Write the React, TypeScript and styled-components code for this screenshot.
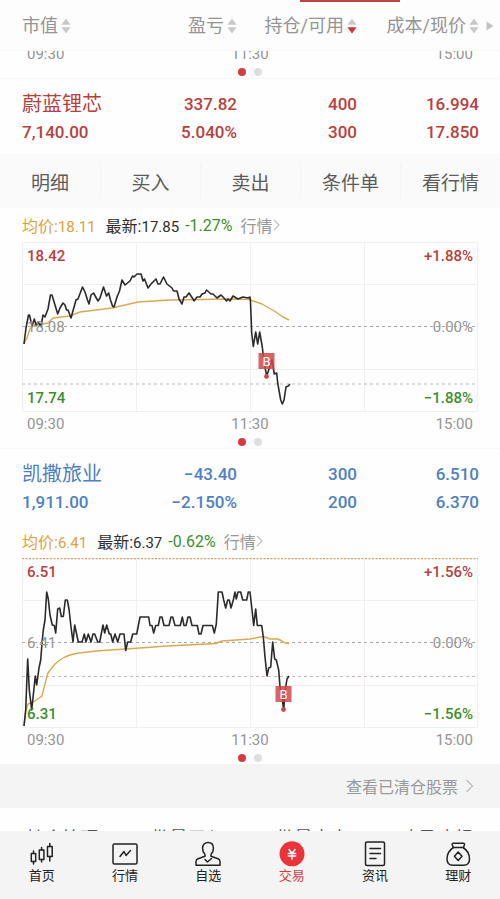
import React from "react";
import styled, { createGlobalStyle } from "styled-components";

const GlobalStyle = createGlobalStyle`
  *, *::before, *::after { box-sizing: border-box; }
  body {
    margin: 0;
    background: #fefefe;
    color: #333;
    font-family: Roboto, "Noto Sans CJK SC", sans-serif;
  }
  button {
    border: 0;
    padding: 0;
    margin: 0;
    background: none;
    color: inherit;
    font: inherit;
    cursor: pointer;
  }
  a { color: inherit; text-decoration: none; }
`;

const RED = "#b8403d";
const BLUE = "#4f80c4";
const GREEN = "#3d8f2c";
const GRAY = "#949494";

const Page = styled.div`
  display: flex;
  flex-direction: column;
  height: 100vh;
`;

const Header = styled.header`
  position: relative;
  flex: none;
  background: #fdfdfd;
  border-bottom: 1px solid #f6f6f6;
`;

const TabStrip = styled.div`
  display: grid;
  grid-template-columns: repeat(5, 1fr);
  height: 2px;
`;

const TabMark = styled.span`
  grid-column: 4;
  background: #bd4447;
`;

const Columns = styled.div`
  display: grid;
  grid-template-columns: 108fr 107fr 120fr 122fr;
  padding: 0 21px 0 22px;
`;

const HeadColumns = styled(Columns)`
  height: 48px;
  align-items: center;
`;

const SortButton = styled.button<{ $first?: boolean }>`
  display: flex;
  align-items: center;
  justify-self: ${(p) => (p.$first ? "start" : "end")};
  gap: 3px;
  font-size: 18px;
  line-height: 28px;
  color: ${GRAY};
  white-space: nowrap;
`;

const MoreColumns = styled.button`
  position: absolute;
  right: 6px;
  top: 20px;
  display: flex;
`;

const Content = styled.main`
  flex: 1;
  min-height: 0;
  overflow-y: auto;
  scrollbar-width: none;
`;

const ScrolledCard = styled.section`
  display: flex;
  flex-direction: column;
  justify-content: flex-end;
  height: 28px;
  overflow: hidden;
  border-bottom: 1px solid #f6f6f6;
`;

const StockCard = styled.section`
  &:not(:last-of-type) { border-bottom: 1px solid #f8f8f8; }
`;

const Holding = styled(Columns)<{ $tone: string }>`
  padding-top: 11px;
  padding-bottom: 8px;
  color: ${(p) => p.$tone};
  font-size: 17px;
  font-weight: 500;
  line-height: 28px;
`;

const StockName = styled.span`
  font-size: 20px;
  font-weight: 400;
  white-space: nowrap;
`;

const Value = styled.span<{ $first?: boolean }>`
  text-align: ${(p) => (p.$first ? "left" : "right")};
`;

const Actions = styled.div`
  display: grid;
  grid-template-columns: repeat(5, 1fr);
  align-items: center;
  height: 54px;
  background: #fafafa;
`;

const Action = styled.button`
  height: 34px;
  font-size: 19px;
  color: #5c5c5c;
  & + & { border-left: 1px solid #f5f5f5; }
`;

const Quote = styled.div`
  display: flex;
  align-items: center;
  height: 34px;
  padding: 0 22px;
  font-size: 16px;
  white-space: nowrap;
`;

const QuoteItem = styled.span<{ $color: string; $gap: number }>`
  color: ${(p) => p.$color};
  margin-right: ${(p) => p.$gap}px;
`;

const Digits = styled.span`
  font-size: 15px;
`;

const QuoteLink = styled.a`
  display: flex;
  align-items: center;
  color: #999;
`;

const Plot = styled.div`
  position: relative;
  margin: 0 22px;
`;

const PlotSvg = styled.svg`
  display: block;
  width: 100%;
  height: auto;
`;

const Scale = styled.div`
  position: absolute;
  inset: 0;
  display: flex;
  flex-direction: column;
  justify-content: space-between;
  padding: 5px;
`;

const ScaleRow = styled.div<{ $color: string; $strong?: boolean }>`
  display: flex;
  justify-content: space-between;
  color: ${(p) => p.$color};
  font-size: 15px;
  font-weight: ${(p) => (p.$strong ? 500 : 400)};
  line-height: 18px;
`;

const Times = styled.div`
  display: flex;
  justify-content: space-between;
  flex: none;
  padding: 0 27px;
  font-size: 15px;
  line-height: 24px;
  color: ${GRAY};
`;

const Pager = styled.div`
  display: flex;
  flex: none;
  justify-content: center;
  align-items: center;
  gap: 8px;
  height: 12px;
`;

const Dot = styled.span<{ $on?: boolean }>`
  width: 8px;
  height: 8px;
  border-radius: 50%;
  background: ${(p) => (p.$on ? "#d63c42" : "#dedede")};
`;

const ClosedLink = styled.a`
  display: flex;
  align-items: center;
  justify-content: flex-end;
  gap: 7px;
  height: 44px;
  padding-right: 26px;
  background: #f4f4f4;
  font-size: 16px;
  color: #999;
`;

const BatchBar = styled.div`
  display: grid;
  grid-template-columns: repeat(4, 1fr);
  height: 58px;
`;

const BatchButton = styled.button`
  font-size: 18px;
  color: #555;
`;

const Nav = styled.nav`
  display: grid;
  grid-template-columns: repeat(6, 1fr);
  flex: none;
  padding: 10px 0 14px;
  background: #f4f4f4;
`;

const NavItem = styled.a<{ $active?: boolean }>`
  display: flex;
  flex-direction: column;
  align-items: center;
  font-size: 13px;
  line-height: 18px;
  color: ${(p) => (p.$active ? "#d8383c" : "#222")};
`;

function SortIcon({ down }: { down?: boolean }) {
  return (
    <svg width="10" height="16" viewBox="0 0 10 16" aria-hidden="true">
      <path d="M5 0.5 9.6 6.8H.4Z" fill="#c9c9c9" />
      <path d="M5 15.5 9.6 9.2H.4Z" fill={down ? "#d2333a" : "#c9c9c9"} />
    </svg>
  );
}

function Chevron({ width, height }: { width: number; height: number }) {
  return (
    <svg width={width} height={height} viewBox="0 0 8 14" fill="none" stroke="#bdbdbd" strokeWidth="1.3" aria-hidden="true">
      <path d="M1 1 7 7 1 13" />
    </svg>
  );
}

type ChartData = {
  high: string;
  mid: string;
  low: string;
  swing: string;
  price: string;
  average: string;
  last: number;
  limitLine?: boolean;
  buy: { x: number; box: number; dot: number };
};

function Chart({ data }: { data: ChartData }) {
  const { buy } = data;
  return (
    <Plot>
      <Scale>
        <ScaleRow $color={RED} $strong>
          <span>{data.high}</span>
          <span>+{data.swing}</span>
        </ScaleRow>
        <ScaleRow $color={GRAY}>
          <span>{data.mid}</span>
          <span>0.00%</span>
        </ScaleRow>
        <ScaleRow $color={GREEN} $strong>
          <span>{data.low}</span>
          <span>−{data.swing}</span>
        </ScaleRow>
      </Scale>
      <PlotSvg viewBox="0 0 456 170" fill="none" role="img" aria-label="分时图">
        <path d="M.5 .5H455.5V169.5H.5ZM114.5 0V170M228.5 0V170M342.5 0V170M0 42.5H456M0 127.5H456" stroke="#f0f0f0" />
        {data.limitLine && <path d="M0 .5H456" stroke="#dfa06a" strokeWidth="1.4" strokeDasharray="2 1.5" />}
        <path d="M0 84.5H456" stroke="#aaa" strokeWidth="1.2" strokeDasharray="3 3" />
        <path d={`M0 ${data.last}H456`} stroke="#c8b8b4" strokeWidth="1.2" strokeDasharray="3 3" />
        <polyline points={data.average} stroke="#d6ab50" strokeWidth="1.4" strokeLinejoin="round" />
        <polyline points={data.price} stroke="#2b2b2d" strokeWidth="1.6" strokeLinejoin="round" />
        <rect x={buy.x - 8} y={buy.box} width="16" height="16" fill="#d4484b" fillOpacity=".85" />
        <circle cx={buy.x} cy={buy.dot} r="2.4" fill="#c9484b" />
        <text x={buy.x} y={buy.box + 13} textAnchor="middle" fontSize="13" fill="#fff">
          B
        </text>
      </PlotSvg>
    </Plot>
  );
}

function TimeAxis() {
  return (
    <>
      <Times>
        <span>09:30</span>
        <span>11:30</span>
        <span>15:00</span>
      </Times>
      <Pager>
        <Dot $on />
        <Dot />
      </Pager>
    </>
  );
}

type Stock = {
  name: string;
  tone: string;
  top: string[];
  bottom: string[];
  average: string;
  latest: string;
  change: string;
  actions?: string[];
  chart: ChartData;
};

const stocks: Stock[] = [
  {
    name: "蔚蓝锂芯",
    tone: RED,
    top: ["337.82", "400", "16.994"],
    bottom: ["7,140.00", "5.040%", "300", "17.850"],
    average: "18.11",
    latest: "17.85",
    change: "-1.27%",
    actions: ["明细", "买入", "卖出", "条件单", "看行情"],
    chart: {
      high: "18.42",
      mid: "18.08",
      low: "17.74",
      swing: "1.88%",
      last: 142,
      buy: { x: 244.5, box: 111, dot: 134.5 },
      average: "2,101 5,96 8,87 12,83 26,81 31,76 48,74 58,70 90,66 103,63 116,60 148,58 178,57.5 208,57 228,57.5 231,59 240,62 245,65 253,69.5 261,75 267,78",
      price:
        "2,102 4,86 6.5,73 7.5,73 10,84 12.3,77 14,83 16,80 19,84.5 21,73 23,75 26,67 28.5,53 30,53 33,63 35.7,72 38,66 41,61 43,63 44.5,68 46,68 49,76 54,58 56,57 60.5,45 63,50 65.5,58 67,62 69,53 71.5,51 76,59 78,56 81.5,45 84.5,54 86.7,51 88.5,58 90.5,64 92,65 95,55 97.5,49 100,38 103,43 108,39 110.5,34 112,35 115,32 119,32 121,39 122.5,37 126,46 129,42 134,37 136,42 138,42 141.5,35 145,42 150,46 151.5,49 155,49 157,57 160,62 162,55 164,55 167,51 171,57 172,59 175,55 178,55 180,52 183,51 184.5,48 189,52 191,52 195,56 199,53 201,55 204.5,59 206,57 208,59 211,54 216,57 221,55 226,56 228,55 228.5,60 229.7,91 231.3,104.5 233.7,90 235.7,102 237.7,90 240.3,105 242,120 244.7,134 247,127 250,118 252.3,132 254.7,131 255.7,141 258.7,158 260.3,162 262,158 264,145 266.3,144 268,142",
    },
  },
  {
    name: "凯撒旅业",
    tone: BLUE,
    top: ["−43.40", "300", "6.510"],
    bottom: ["1,911.00", "−2.150%", "200", "6.370"],
    average: "6.41",
    latest: "6.37",
    change: "-0.62%",
    chart: {
      high: "6.51",
      mid: "6.41",
      low: "6.31",
      swing: "1.56%",
      last: 118.5,
      limitLine: true,
      buy: { x: 261.5, box: 128, dot: 151.5 },
      average:
        "2,168 4,152 6,146 11,144 16,141 20,138 22,130 24,122 26,115 29,111 33,106 38,102 43,99 48,97 54,95.5 61,94.5 75,93 88,92 111,90.5 145,88 194,85.5 197,84 200,83 228,81 238,79 243,79 248,81 256,81 260,83 263,85 267,85.5",
      price:
        "2,168 3.7,152 5.7,101 7.3,132 9.7,152 13.3,118 14.7,127 17,110 18.7,102 20.3,82 21.3,72 23,62 24.7,34 26.3,41 28,57 30.3,67 32.3,67.5 33.7,75 35.7,51 37.7,50 39.3,58.5 41.3,58.5 43.3,42 45.3,42 47,51 49,69 51,84 52.7,67 56.3,84 60,84 62.3,76 64,84 66.3,76 69,84 71,76 72.7,76 75.7,84 77.7,84 81,67 82.7,75 84.7,67 87.3,76 88.7,76 90.7,84 93,76 95.7,84 98,76 102,76 103.7,92.5 105.7,84 108.7,84 110.7,76 114.7,76 118,59 126.7,59 128,67.5 130,67.5 131.7,75 133.7,67.5 136.3,67.5 138,59 140,59 142,67.5 147,67.5 149,59 150.7,59 153,67.5 158.3,67.5 160.3,59 162,67.5 164,67.5 166,59 168,59 170,67.5 175.3,67.5 177,76 179,76 181,67.5 190.3,67.5 192.3,75 194.3,66 196.3,34 200,34 201.7,42 203.7,50 205.7,42 207.3,42 209,50 211.3,42 213,34 214.3,41 216,34 218.7,34 220.7,42 224.7,42 226.3,34 228,34 229.7,49 231.7,67.5 233.7,51 235.3,67.5 239.7,67.5 241.3,79 243,99 245,118 246.7,110 248.7,109 250.7,84 252.7,101 254.3,102 256.7,112 258,129 260,139 261.7,152 263.3,132 265,121 267,118",
    },
  },
];

function StockSection({ stock }: { stock: Stock }) {
  return (
    <StockCard>
      <Holding $tone={stock.tone}>
        <StockName>{stock.name}</StockName>
        {stock.top.map((v) => (
          <Value key={v}>{v}</Value>
        ))}
        {stock.bottom.map((v, i) => (
          <Value key={v} $first={i === 0}>
            {v}
          </Value>
        ))}
      </Holding>
      {stock.actions && (
        <Actions>
          {stock.actions.map((a) => (
            <Action key={a}>{a}</Action>
          ))}
        </Actions>
      )}
      <Quote>
        <QuoteItem $color="#dfa23f" $gap={10}>
          均价:<Digits>{stock.average}</Digits>
        </QuoteItem>
        <QuoteItem $color="#2e2e2e" $gap={6}>
          最新:<Digits>{stock.latest}</Digits>
        </QuoteItem>
        <QuoteItem $color={GREEN} $gap={8}>
          {stock.change}
        </QuoteItem>
        <QuoteLink href="#quote">
          行情
          <Chevron width={7} height={12} />
        </QuoteLink>
      </Quote>
      <Chart data={stock.chart} />
      <TimeAxis />
    </StockCard>
  );
}

function NavIcon({ children }: { children: React.ReactNode }) {
  return (
    <svg width="26" height="26" viewBox="0 0 26 26" fill="none" stroke="#222" strokeWidth="1.5" strokeLinejoin="round" strokeLinecap="round" aria-hidden="true">
      {children}
    </svg>
  );
}

const navItems = [
  {
    label: "首页",
    icon: (
      <>
        <path d="M2.3 12.5h4.4v8H2.3zM10.3 9h4.6v9.5h-4.6zM18.5 5.5h4.7v10h-4.7z" />
        <path d="M4.5 10v2.5M4.5 20.5V23M12.6 6.5V9M12.6 18.5V21M20.8 2.5v3M20.8 15.5v4.5" />
      </>
    ),
  },
  {
    label: "行情",
    icon: (
      <>
        <rect x="1" y="3" width="24" height="20" rx="1.5" />
        <path d="M8 15.5 12 10.5 14 14.5 18.500 9.5" />
      </>
    ),
  },
  {
    label: "自选",
    icon: (
      <>
        <path d="M10 13.5C8.3 11.8 7.6 9.6 7.6 7.2 7.6 3.6 9.7 1.5 13 1.5s5.400 2.100 5.400 5.700c0 2.400-.7 4.600-2.400 6.300v1.800l7 2.400c1.400.5 2 1.300 2 2.800v3.700H1v-3.700c0-1.500.6-2.300 2-2.800l7-2.400Z" />
        <path d="M10 18.5 12.5 21 16.5 17.5" />
      </>
    ),
  },
  {
    label: "交易",
    active: true,
    icon: (
      <>
        <circle cx="13" cy="12.8" r="12.5" fill="#e9343a" stroke="none" />
        <path d="M10 8.5 13 12.5 16 8.5M9.3 12.5h7.4M9.3 15h7.4M13 12.5V18" stroke="#fff" />
      </>
    ),
  },
  {
    label: "资讯",
    icon: (
      <>
        <rect x="3.5" y="1" width="19" height="23.5" rx="1.5" />
        <path d="M8 7.5h10.500M8 12.500h10.500M8 17.500h6" />
      </>
    ),
  },
  {
    label: "理财",
    icon: (
      <>
        <path d="M8.2 2.3h10.300a1 1 0 0 1 1 1.300l-1 2.900H8.200l-1-2.900a1 1 0 0 1 1-1.300Z" />
        <path d="M8.5 6.5C4.5 9 2 13.5 2 18c0 4 2.5 6.300 6 6.300h10.500c3.500 0 6-2.300 6-6.300 0-4.500-2.500-9-6.500-11.500" />
        <path d="M13.200 11 17 15.200 13.200 19.400 9.400 15.200Z" />
      </>
    ),
  },
];

export default function App() {
  return (
    <Page>
      <GlobalStyle />
      <Header>
        <TabStrip>
          <TabMark />
        </TabStrip>
        <HeadColumns>
          <SortButton $first>
            市值
            <SortIcon />
          </SortButton>
          <SortButton>
            盈亏
            <SortIcon />
          </SortButton>
          <SortButton>
            持仓/可用
            <SortIcon down />
          </SortButton>
          <SortButton>
            成本/现价
            <SortIcon />
          </SortButton>
        </HeadColumns>
        <MoreColumns aria-label="更多列">
          <svg width="8" height="12" viewBox="0 0 8 12" aria-hidden="true">
            <path d="M.5 1.5 7.5 6 .5 10.5Z" fill="#c4c4c4" />
          </svg>
        </MoreColumns>
      </Header>
      <Content>
        <ScrolledCard>
          <TimeAxis />
        </ScrolledCard>
        {stocks.map((s) => (
          <StockSection key={s.name} stock={s} />
        ))}
        <ClosedLink href="#closed">
          查看已清仓股票
          <Chevron width={9} height={14} />
        </ClosedLink>
        <BatchBar>
          {["持仓管理", "批量买入", "批量卖出", "止盈止损"].map((t) => (
            <BatchButton key={t}>{t}</BatchButton>
          ))}
        </BatchBar>
      </Content>
      <Nav>
        {navItems.map((n) => (
          <NavItem key={n.label} href={`#${n.label}`} $active={n.active}>
            <NavIcon>{n.icon}</NavIcon>
            {n.label}
          </NavItem>
        ))}
      </Nav>
    </Page>
  );
}
